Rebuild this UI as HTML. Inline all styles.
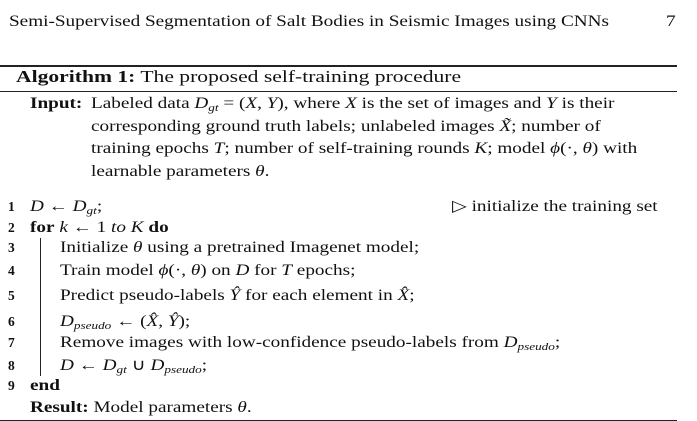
<!DOCTYPE html><html><head><style>
body{margin:0;width:697px;height:421px;background:#fff;position:relative;overflow:hidden;font-family:"Liberation Serif",serif;font-size:16px;color:#111}
.l{position:absolute;white-space:nowrap;line-height:20px;transform:scaleX(1.2);transform-origin:0 0}
.n{position:absolute;left:8px;font-weight:bold;font-size:13.5px;line-height:20px}
.r{position:absolute;left:0;width:677px;background:#222}
i{font-style:italic}
sub{font-size:11px;vertical-align:-3px;line-height:0;font-style:italic}
</style></head><body>
<div class="l" style="left:9px;top:12px">Semi-Supervised Segmentation of Salt Bodies in Seismic Images using CNNs</div>
<div class="l" style="left:666px;top:12px">7</div>
<div class="r" style="top:65px;height:1.5px"></div>
<div class="l" style="left:16px;top:67px;font-size:17px;transform:scaleX(1.27)"><b>Algorithm 1:</b> The proposed self-training procedure</div>
<div class="r" style="top:91px;height:1px"></div>
<div class="l" style="left:30px;top:94px"><b>Input:</b></div>
<div class="l" style="left:91px;top:94px">Labeled data <i>D</i><sub>gt</sub> = (<i>X</i>, <i>Y</i>), where <i>X</i> is the set of images and <i>Y</i> is their</div>
<div class="l" style="left:91px;top:117px">corresponding ground truth labels; unlabeled images <i>X̃</i>; number of</div>
<div class="l" style="left:91px;top:139px">training epochs <i>T</i>; number of self-training rounds <i>K</i>; model <i>ϕ</i>(·, <i>θ</i>) with</div>
<div class="l" style="left:91px;top:162px">learnable parameters <i>θ</i>.</div>
<div class="n" style="top:197px">1</div><div class="l" style="left:30px;top:197px"><i>D</i> ← <i>D</i><sub>gt</sub>;</div>
<div class="l" style="left:452px;top:197px">▷ initialize the training set</div>
<div class="n" style="top:218px">2</div><div class="l" style="left:30px;top:218px"><b>for</b> <i>k</i> ← 1 <i>to</i> <i>K</i> <b>do</b></div>
<div style="position:absolute;left:40px;top:238px;width:1px;height:138px;background:#222"></div>
<div class="n" style="top:238px">3</div><div class="l" style="left:60px;top:238px">Initialize <i>θ</i> using a pretrained Imagenet model;</div>
<div class="n" style="top:261px">4</div><div class="l" style="left:60px;top:261px">Train model <i>ϕ</i>(·, <i>θ</i>) on <i>D</i> for <i>T</i> epochs;</div>
<div class="n" style="top:286px">5</div><div class="l" style="left:60px;top:286px">Predict pseudo-labels <i>Ŷ</i> for each element in <i>X̂</i>;</div>
<div class="n" style="top:312px">6</div><div class="l" style="left:60px;top:312px"><i>D</i><sub>pseudo</sub> ← (<i>X̂</i>, <i>Ŷ</i>);</div>
<div class="n" style="top:333px">7</div><div class="l" style="left:60px;top:333px">Remove images with low-confidence pseudo-labels from <i>D</i><sub>pseudo</sub>;</div>
<div class="n" style="top:356px">8</div><div class="l" style="left:60px;top:356px"><i>D</i> ← <i>D</i><sub>gt</sub> ∪ <i>D</i><sub>pseudo</sub>;</div>
<div class="n" style="top:376px">9</div><div class="l" style="left:30px;top:376px"><b>end</b></div>
<div class="l" style="left:30px;top:398px"><b>Result:</b> Model parameters <i>θ</i>.</div>
<div class="r" style="top:420px;height:1px"></div>
</body></html>
